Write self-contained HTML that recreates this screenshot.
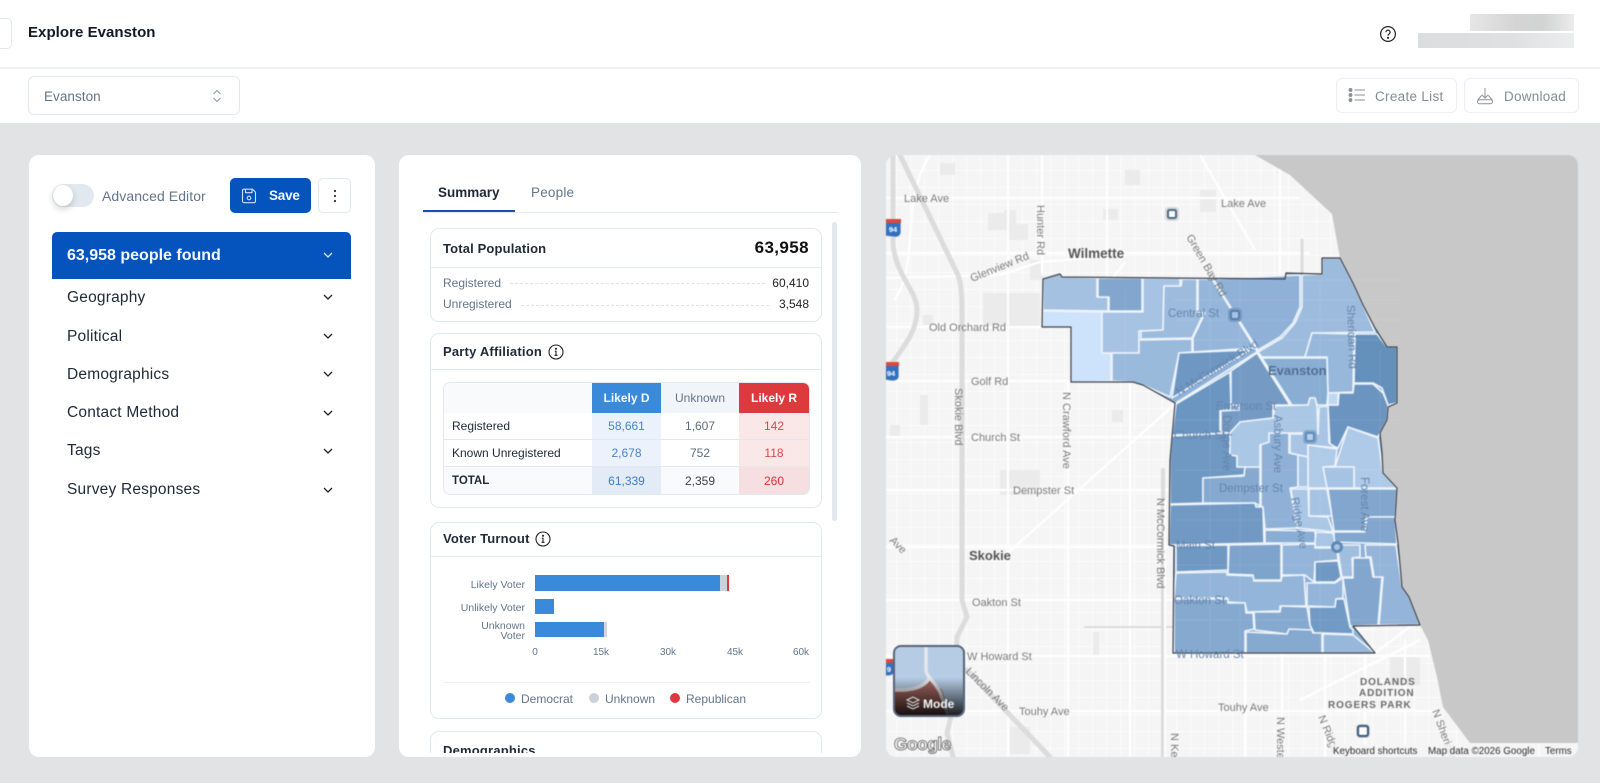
<!DOCTYPE html>
<html lang="en"><head><meta charset="utf-8"><title>Explore Evanston</title>
<style>
*{box-sizing:border-box}
html,body{margin:0;padding:0;width:1600px;height:783px;overflow:hidden;background:#e2e3e5;font-family:"Liberation Sans",sans-serif;color:#111827}
.a{position:absolute}
.t{position:absolute;white-space:nowrap}
.card{position:absolute;background:#fff;border-radius:10px}
.sub{position:absolute;left:430px;width:392px;border:1px solid #e2e8f0;border-radius:9px;background:#fff}
.hr{position:absolute;height:1px;background:#e2e8f0}
.row{position:absolute;left:67px;font-size:15.5px;line-height:20px;color:#1f2937;letter-spacing:.2px;white-space:nowrap}
table{position:absolute;left:443px;top:382px;width:367px;height:113px;border-collapse:separate;border-spacing:0;table-layout:fixed;font-size:12px;border:1px solid #e2e8f0;border-radius:7px;overflow:hidden}
td{padding:0;text-align:center;border-bottom:1px solid #e2e8f0;color:#5f6b7c}
td:first-child{text-align:left;padding-left:8px;color:#1f2937}
tr:last-child td{border-bottom:0}
.d{background:#ebf2fb;color:#4a82cf}.r{background:#fae8e8;color:#d9474b}
.lab{position:absolute;text-align:right;font-size:10.5px;line-height:10px;color:#64748b;right:1075px}
.ax{position:absolute;top:647px;font-size:10px;line-height:11px;color:#64748b;width:30px;text-align:center}
svg text{font-family:"Liberation Sans",sans-serif}
.m{font-size:11px;fill:#7b7b7b}
.o{font-size:11.5px;fill:#6585ab}
</style></head><body>

<div class="a" style="left:0;top:0;width:1600px;height:123px;background:#fff"></div>
<div class="a" style="left:0;top:67px;width:1600px;height:2px;background:#eef0f3"></div>
<div class="a" style="left:-20px;top:18px;width:32px;height:31px;border:1px solid #e2e8f0;border-radius:5px"></div>
<div class="t" style="left:28px;top:23px;font-size:15px;line-height:20px;font-weight:700;color:#111827;letter-spacing:.05px">Explore Evanston</div>

<svg class="a" style="left:1379px;top:25px" width="18" height="18" viewBox="0 0 18 18" fill="none" stroke="#222" stroke-width="1.2"><circle cx="9" cy="9" r="7.4"/><path d="M6.9 7.2a2.1 2.1 0 1 1 3.2 1.8c-.7.4-1.1.8-1.1 1.6"/><circle cx="9" cy="12.8" r=".5" fill="#222"/></svg>
<div class="a" style="left:1470px;top:14px;width:104px;height:17px;background:linear-gradient(90deg,#e6e6e6,#d4d4d4 45%,#d2d3d3 70%,#ececec)"></div>
<div class="a" style="left:1418px;top:33px;width:156px;height:15px;background:linear-gradient(90deg,#dcdddf,#dfe0e2 60%,#eceded)"></div>

<div class="a" style="left:28px;top:76px;width:212px;height:39px;border:1px solid #e2e8f0;border-radius:6px"></div>
<div class="t" style="left:44px;top:87px;font-size:13.5px;line-height:20px;color:#64748b;letter-spacing:.05px">Evanston</div>
<svg class="a" style="left:210px;top:88px" width="14" height="16" viewBox="0 0 14 16" fill="none" stroke="#8b98aa" stroke-width="1"><path d="M3.500 6 7 2.500 10.500 6M3.500 10 7 13.500 10.500 10"/></svg>

<div class="a" style="left:1336px;top:78px;width:121px;height:35px;border:1px solid #eceff3;border-radius:6px"></div>
<svg class="a" style="left:1348px;top:87px" width="18" height="17" viewBox="0 0 18 17" fill="none" stroke="#8b909b" stroke-width="1.1"><circle cx="2.500" cy="3" r="1.400" fill="#8b909b"/><circle cx="2.500" cy="8" r="1.400" fill="#8b909b"/><circle cx="2.500" cy="13" r="1.400" fill="#8b909b"/><path d="M6.500 3H17M6.500 8H17M6.500 13H17"/></svg>
<div class="t" style="left:1375px;top:87px;font-size:13.500px;line-height:20px;color:#868b96;letter-spacing:.3px">Create List</div>
<div class="a" style="left:1464px;top:78px;width:115px;height:35px;border:1px solid #eceff3;border-radius:6px"></div>
<svg class="a" style="left:1476px;top:87px" width="18" height="18" viewBox="0 0 18 18" fill="none" stroke="#8b909b" stroke-width="1"><path d="M9 1v10M5.800 7.800 9 11l3.200-3.200M5.500 8.500 1.800 13M12.500 8.500 16.200 13"/><rect x="1.500" y="12.700" width="15" height="4" rx="2"/></svg>
<div class="t" style="left:1504px;top:87px;font-size:13.500px;line-height:20px;color:#868b96;letter-spacing:.25px">Download</div>

<!-- left card -->
<div class="card" style="left:29px;top:155px;width:346px;height:602px"></div>
<div class="a" style="left:52px;top:184px;width:42px;height:23px;border-radius:12px;background:#e2e8f0"></div>
<div class="a" style="left:53px;top:185px;width:20px;height:21px;border-radius:50%;background:#fff;box-shadow:0 3px 7px rgba(0,0,0,.18)"></div>
<div class="t" style="left:102px;top:186px;font-size:14px;line-height:20px;color:#64748b;letter-spacing:.07px">Advanced Editor</div>
<div class="a" style="left:230px;top:178px;width:81px;height:35px;border-radius:5px;background:#0553bd"></div>
<svg class="a" style="left:241px;top:188px" width="16" height="16" viewBox="0 0 16 16" fill="none" stroke="#cfe0f7" stroke-width="1.100"><path d="M2.500 1.200h9l3 3v9a1.500 1.500 0 0 1-1.500 1.500H3A1.500 1.500 0 0 1 1.500 13V2.200a1 1 0 0 1 1-1zM4.500 1.200v3.500h6.500V1.200"/><circle cx="8" cy="10" r="1.800"/></svg>
<div class="t" style="left:269px;top:186px;font-size:13.500px;line-height:20px;font-weight:700;color:#f3f7fd;letter-spacing:-.2px">Save</div>
<div class="a" style="left:318px;top:178px;width:33px;height:35px;border:1px solid #e2e8f0;border-radius:5px"></div>
<svg class="a" style="left:333px;top:188px" width="4" height="16" viewBox="0 0 4 16" fill="#333"><circle cx="2" cy="3" r="1.100"/><circle cx="2" cy="8" r="1.100"/><circle cx="2" cy="13" r="1.100"/></svg>
<div class="a" style="left:52px;top:232px;width:299px;height:47px;border-radius:5px 5px 0 0;background:#0553bd"></div>
<div class="t" style="left:67px;top:246px;font-size:16px;line-height:20px;font-weight:700;color:#f4f8fe">63,958 people found</div>
<svg class="a" style="left:322px;top:250px" width="12" height="10" viewBox="0 0 12 10" fill="none" stroke="#dbe7f8" stroke-width="1.300"><path d="M2 3l4 4 4-4"/></svg>
<div class="row" style="top:288px">Geography</div>
<div class="row" style="top:327px">Political</div>
<div class="row" style="top:365px">Demographics</div>
<div class="row" style="top:403px">Contact Method</div>
<div class="row" style="top:441px">Tags</div>
<div class="row" style="top:480px">Survey Responses</div>
<svg class="a" style="left:322px;top:291px" width="12" height="210" viewBox="0 0 12 210" fill="none" stroke="#222" stroke-width="1.300"><path d="M2 4l4 4 4-4M2 43l4 4 4-4M2 81l4 4 4-4M2 120l4 4 4-4M2 158l4 4 4-4M2 197l4 4 4-4"/></svg>

<!-- center card -->
<div class="card" style="left:399px;top:155px;width:462px;height:602px"></div>
<div class="t" style="left:438px;top:184px;font-size:13.500px;line-height:18px;font-weight:700;color:#1f2937">Summary</div>
<div class="t" style="left:531px;top:184px;font-size:13.500px;line-height:18px;color:#64748b;letter-spacing:.2px">People</div>
<div class="hr" style="left:423px;top:212px;width:415px"></div>
<div class="a" style="left:423px;top:210px;width:92px;height:2px;background:#1e4fae"></div>
<div class="a" style="left:832px;top:222px;width:5px;height:299px;border-radius:3px;background:#e3e8ef"></div>

<div class="sub" style="top:228px;height:94px"></div>
<div class="hr" style="left:431px;top:267px;width:390px"></div>
<div class="t" style="left:443px;top:240px;font-size:13px;line-height:17px;font-weight:700;color:#1f2937;letter-spacing:.15px">Total Population</div>
<div class="t" style="right:791px;top:238px;font-size:17px;line-height:20px;font-weight:700;color:#111;letter-spacing:.4px">63,958</div>
<div class="t" style="left:443px;top:275px;font-size:12px;line-height:17px;color:#64748b">Registered</div>
<div class="a" style="left:510px;top:283px;width:255px;border-top:1px dashed #dde2e9"></div>
<div class="t" style="right:791px;top:275px;font-size:12px;line-height:17px;color:#222">60,410</div>
<div class="t" style="left:443px;top:296px;font-size:12px;line-height:17px;color:#64748b">Unregistered</div>
<div class="a" style="left:521px;top:305px;width:248px;border-top:1px dashed #dde2e9"></div>
<div class="t" style="right:791px;top:296px;font-size:12px;line-height:17px;color:#222">3,548</div>

<div class="sub" style="top:333px;height:175px"></div>
<div class="hr" style="left:431px;top:369px;width:390px"></div>
<div class="t" style="left:443px;top:343px;font-size:13px;line-height:17px;font-weight:700;color:#1f2937;letter-spacing:.2px">Party Affiliation</div>
<svg class="a" style="left:548px;top:344px" width="16" height="16" viewBox="0 0 16 16" fill="none" stroke="#222" stroke-width="1.100"><circle cx="8" cy="8" r="7"/><path d="M6.800 7.200H8v4M6.500 11.300h3"/><circle cx="8" cy="4.800" r=".5" fill="#222"/></svg>
<table>
<colgroup><col style="width:148px"><col style="width:69px"><col style="width:78px"><col style="width:70px"></colgroup>
<tr style="height:30px"><td style="background:#f8fafc;border:0"></td><td style="background:#3a8ad9;color:#f4f8fe;font-weight:700;border:0">Likely D</td><td style="background:#f1f4f8;color:#64748b;border:0">Unknown</td><td style="background:#dd3a3d;color:#fff;font-weight:700;border:0">Likely R</td></tr>
<tr style="height:27px"><td>Registered</td><td class="d">58,661</td><td>1,607</td><td class="r">142</td></tr>
<tr style="height:27px"><td>Known Unregistered</td><td class="d">2,678</td><td>752</td><td class="r">118</td></tr>
<tr style="height:27px"><td style="background:#f8fafc;font-weight:700;font-size:11.500px">TOTAL</td><td class="d" style="background:#e3ebf6;color:#3f7bc9">61,339</td><td style="background:#f8fafc;color:#374151">2,359</td><td class="r" style="background:#f5dfe0;color:#d73338">260</td></tr>
</table>

<div class="sub" style="top:522px;height:197px"></div>
<div class="hr" style="left:431px;top:556px;width:390px"></div>
<div class="t" style="left:443px;top:530px;font-size:13px;line-height:17px;font-weight:700;color:#1f2937;letter-spacing:.2px">Voter Turnout</div>
<svg class="a" style="left:535px;top:531px" width="16" height="16" viewBox="0 0 16 16" fill="none" stroke="#222" stroke-width="1.100"><circle cx="8" cy="8" r="7"/><path d="M6.800 7.200H8v4M6.500 11.300h3"/><circle cx="8" cy="4.800" r=".5" fill="#222"/></svg>
<div class="lab" style="top:580px">Likely Voter</div>
<div class="lab" style="top:603px">Unlikely Voter</div>
<div class="lab" style="top:621px;width:70px">Unknown<br>Voter</div>
<div class="a" style="left:535px;top:575px;width:185px;height:16px;background:#3a8adb"></div>
<div class="a" style="left:720px;top:575px;width:7px;height:16px;background:#cbd2db"></div>
<div class="a" style="left:727px;top:575px;width:1.500px;height:16px;background:#dd3a3d"></div>
<div class="a" style="left:535px;top:599px;width:19px;height:15px;background:#3a8adb"></div>
<div class="a" style="left:535px;top:622px;width:69px;height:15px;background:#3a8adb"></div>
<div class="a" style="left:604px;top:622px;width:3px;height:15px;background:#d3d6de"></div>
<div class="ax" style="left:520px">0</div><div class="ax" style="left:586px">15k</div><div class="ax" style="left:653px">30k</div><div class="ax" style="left:720px">45k</div><div class="ax" style="left:786px">60k</div>
<div class="hr" style="left:443px;top:682px;width:367px;background:#eceff3"></div>
<div class="a" style="left:505px;top:693px;width:10px;height:10px;border-radius:50%;background:#3a8adb"></div>
<div class="t" style="left:521px;top:691px;font-size:12px;line-height:16px;color:#64748b">Democrat</div>
<div class="a" style="left:589px;top:693px;width:10px;height:10px;border-radius:50%;background:#cbd2db"></div>
<div class="t" style="left:605px;top:691px;font-size:12px;line-height:16px;color:#64748b">Unknown</div>
<div class="a" style="left:670px;top:693px;width:10px;height:10px;border-radius:50%;background:#dd3a3d"></div>
<div class="t" style="left:686px;top:691px;font-size:12px;line-height:16px;color:#64748b">Republican</div>

<div class="a" style="left:430px;top:731px;width:392px;height:22px;overflow:hidden">
<div class="a" style="left:0;top:0;width:392px;height:40px;border:1px solid #e2e8f0;border-radius:9px"></div>
<div class="t" style="left:13px;top:11px;font-size:13px;line-height:17px;font-weight:700;color:#1f2937;letter-spacing:.2px">Demographics</div>
</div>

<!-- map -->
<svg class="a" style="left:0;top:0;filter:blur(.45px)" width="1600" height="783" viewBox="0 0 1600 783">
<defs>
<clipPath id="mc"><rect x="886" y="155" width="692" height="602" rx="10"/></clipPath>
<clipPath id="tc"><rect x="895" y="647" width="68" height="68" rx="6"/></clipPath>
<pattern id="st" width="14" height="17" patternUnits="userSpaceOnUse"><path d="M0 .5H14M.5 0V17" stroke="#fff" stroke-width="1"/></pattern>
<linearGradient id="tg" x1="0" y1="0" x2="0" y2="1"><stop offset=".45" stop-color="#000" stop-opacity="0"/><stop offset="1" stop-color="#000" stop-opacity=".85"/></linearGradient>
</defs>
<g clip-path="url(#mc)">
<rect x="886" y="155" width="692" height="602" fill="#f5f5f5"/>
<rect x="886" y="155" width="692" height="602" fill="url(#st)" opacity=".65"/>
<g fill="#ebebeb">
<path d="M988 213h16v-3h12v14h12v16h-20v-10h-20z"/><rect x="940" y="163" width="15" height="12"/><rect x="1103" y="209" width="15" height="11"/><rect x="1030" y="260" width="13" height="20"/><rect x="983" y="293" width="57" height="34"/><rect x="923" y="315" width="10" height="10"/><rect x="1112" y="410" width="11" height="12"/><rect x="1010" y="727" width="20" height="27"/><rect x="1093" y="632" width="6" height="23"/><rect x="920" y="395" width="8" height="30"/><rect x="890" y="425" width="10" height="12"/><rect x="1000" y="470" width="40" height="25"/><rect x="1390" y="655" width="30" height="30"/><rect x="1125" y="170" width="15" height="15"/><rect x="1200" y="190" width="16" height="22"/>
</g>
<g fill="none" stroke="#fff" stroke-width="2.200">
<path d="M886 198H1300M886 253H1310M886 278L1000 275 1040 262 1090 258M886 327H1071M886 381H1071M886 437H1170M886 490H1170M886 547H1170M886 600H1175M886 656H1430M886 711H1440M1174 600H1000"/>
<path d="M1042 155V275M1107 155V380M1068 380V757M1008 155V757M1130 382V757M1245 653V757M1282 653V757M1325 653V757M1365 653V757M1405 640V757M1280 155V275M1340 155V255"/>
<path d="M1200 155L1255 250M1176 403L1000 560M1125 262L1075 327M1375 653L1430 612M1300 700L1420 640M895 300C920 260 900 200 930 155"/>
</g>
<g fill="none" stroke="#dcdcdc" stroke-linecap="round">
<path d="M893 155V243C895 275 917 290 917 310 917 335 900 350 886 372" stroke-width="5"/>
<path d="M900 155L958 275C962 285 962 300 962 320V600L967 617 957 637 955 700 947 733 953 757" stroke-width="5"/>
<path d="M967 670L1050 757" stroke-width="5"/>
<path d="M1163 470V757" stroke-width="4"/>
<path d="M1302 240V275" stroke-width="3"/>
<path d="M1085 627H1250" stroke-width="2"/>
</g>
<path d="M1165 500V757" stroke="#fff" stroke-width="2"/>
<path d="M1255 155L1290 175 1332 214 1340 258 1353 283 1363 305 1375 328 1387 347 1397 347 1397 403 1388 407 1387 420 1380 433 1382 453 1383 473 1397 488 1395 520 1398 543 1402 587 1409 597 1420 625 1428 640 1437 677 1443 707 1470 743H1578V155Z" fill="#c8c8c8"/>

<!-- tracts -->
<path d="M1043 279L1060 274 1062 277 1285 279 1286 273 1322 274 1322 258 1340 258 1353 283 1363 305 1375 328 1387 347 1397 347 1397 403 1388 407 1387 420 1380 433 1382 453 1383 473 1397 488 1395 520 1398 543 1402 587 1409 597 1420 625 1353 626 1375 653 1173 653 1174 546 1169 545 1170 460 1175 403 1143 385 1133 382 1071 382 1071 327 1042 327Z" fill="#8fb1d7"/>
<g stroke="#eef4fb" stroke-width="1.600" stroke-linejoin="round">
<path fill="#a4c1e2" d="M1043 279L1060 274 1062 277 1097 278 1097 297 1108 297 1108 311 1043 310Z"/>
<path fill="#82a6cd" d="M1098 278H1142V311H1109V297H1098Z"/>
<path fill="#cde2fb" d="M1043 311L1102 312 1102 353 1111 353 1111 381 1071 382 1071 327 1042 327Z"/>
<path fill="#a6c3e3" d="M1102 312H1143V278H1180V286H1164L1163 330 1139 331V353H1102Z"/>
<path fill="#9dbcdd" d="M1182 279H1197V312L1204 313 1192 338 1141 339V331L1163 330 1164 286H1181Z"/>
<path fill="#9abadc" d="M1112 353H1139V340L1192 339V352L1179 353 1170 397 1143 385 1133 382 1112 381Z"/>
<path fill="#95b6da" d="M1198 279H1212L1255 348 1193 352V338L1205 313 1198 312Z"/>
<path fill="#8fb1d7" d="M1213 279L1300 275V307L1293 323 1280 337 1258 350Z"/>
<path fill="#9dbcdd" d="M1302 275L1322 274 1322 258 1340 258 1353 283 1375 332 1312 333 1305 357 1262 357 1258 352 1282 338 1295 323 1302 307Z"/>
<path fill="#97b8db" d="M1312 333L1354 334 1353 392 1328 393 1327 357 1305 357Z"/>
<path fill="#6490bc" d="M1355 334H1377L1387 347H1397V403L1388 405 1382 388 1373 383H1354Z"/>
<path fill="#6b95c0" d="M1354 384H1373L1383 393 1388 405 1387 420 1380 433 1378 437 1348 427 1338 448 1330 445 1328 405H1338L1339 393 1353 393Z"/>
<path fill="#8aaed3" d="M1262 358H1327L1328 393 1327 405H1317L1315 398H1310L1308 405H1292Z"/>
<path fill="#6f97c3" d="M1179 353L1250 350 1172 398Z"/>
<path fill="#6c96c2" d="M1176 404L1230 372 1231 405V410H1220V432L1230 433 1172 435Z"/>
<path fill="#759bc5" d="M1231 371L1257 353 1290 405H1273V418L1240 422 1230 433 1221 432V411L1239 410V405H1231Z"/>
<path fill="#6f98c3" d="M1172 436L1230 433V455L1237 456V467H1245L1244 475 1203 478V503L1170 504 1170 460Z"/>
<path fill="#86a9d0" d="M1203 478L1244 476 1245 467H1260V506L1255 503H1203Z"/>
<path fill="#7199c4" d="M1170 505L1255 503 1256 507H1263L1264 543 1169 545Z"/>
<path fill="#8fb1d7" d="M1261 444L1269 442V433H1289V453L1298 455V487L1290 488 1297 528 1265 529 1263 507 1261 506Z"/>
<path fill="#aac7e6" d="M1240 422L1273 418 1275 406 1308 405 1310 398H1315L1317 406 1318 433H1269V442L1260 445V467H1237V456L1230 455V433Z"/>
<path fill="#c0d8f2" d="M1328 393H1338V405H1328Z"/>
<path fill="#a8c5e5" d="M1290 434H1318L1319 407 1328 406 1329 443 1337 448 1308 445V457L1290 453Z"/>
<path fill="#aecae8" d="M1348 427L1378 438 1383 473 1397 488H1354V467H1335Z"/>
<path fill="#a6c3e3" d="M1323 467H1354V488H1327Z"/>
<path fill="#b0cbe8" d="M1308 445L1337 449 1335 466 1323 467 1327 488H1308Z"/>
<path fill="#a8c5e5" d="M1298 455L1308 457V487H1298Z"/>
<path fill="#aac7e6" d="M1291 489H1308L1309 516 1328 517 1333 532 1317 530 1297 528Z"/>
<path fill="#a6c3e3" d="M1309 489H1327L1332 516H1309Z"/>
<path fill="#82a6cd" d="M1328 489H1397L1395 517H1366L1365 531H1334Z"/>
<path fill="#82a6cd" d="M1367 517H1395L1397 544 1334 542V532H1365Z"/>
<path fill="#8aaed3" d="M1265 530L1315 531 1316 543H1265Z"/>
<path fill="#a8c5e5" d="M1316 532L1333 533 1336 547H1315V543Z"/>
<path fill="#6f98c3" d="M1176 546L1228 545V570L1176 572Z"/>
<path fill="#7ea3cc" d="M1229 545L1281 544V580H1254L1253 575 1228 574Z"/>
<path fill="#93b5d9" d="M1282 545L1315 544V548H1337L1338 560 1315 562 1314 582 1305 575H1282Z"/>
<path fill="#6f98c3" d="M1315 562L1338 561 1341 577 1335 582H1315Z"/>
<path fill="#a0bfdf" d="M1337 545H1360V557L1352 558 1353 577H1342Z"/>
<path fill="#82a6cd" d="M1353 558H1370L1373 577H1382L1378 625 1350 626 1343 578H1353Z"/>
<path fill="#94b5d9" d="M1365 545H1396L1402 587 1409 597 1420 625H1379L1383 577H1374L1371 557H1366Z"/>
<path fill="#93b5d9" d="M1176 573L1227 572V575L1253 576 1254 581H1281L1282 576 1304 575 1306 606H1280V611L1247 612 1245 603 1228 602 1227 598H1174Z"/>
<path fill="#93b5d9" d="M1307 583H1335L1343 578V598L1336 599 1335 607 1307 606Z"/>
<path fill="#86a9d0" d="M1254 612H1280L1281 606 1307 607 1310 625 1313 633H1290L1287 634 1255 630Z"/>
<path fill="#719ac4" d="M1309 607H1335L1336 599H1344L1350 627 1353 630V634L1323 633 1314 633 1310 625Z"/>
<path fill="#86a9d0" d="M1174 599H1228V603L1245 603 1246 613H1253L1254 629 1245 631V653H1174Z"/>
<path fill="#86a9d0" d="M1246 632L1287 634 1289 629 1312 630 1313 633H1322V653H1246Z"/>
<path fill="#97b8db" d="M1323 634L1353 635 1375 653H1323Z"/>
</g>
<path d="M1176 403L1257 352M1213 279L1290 405" stroke="#eef4fb" stroke-width="1.800" fill="none"/>
<path d="M1174 280H1400M1174 300H1400M1174 320H1400M1174 340H1400M1174 420H1400M1174 470H1400M1174 520H1400M1174 565H1400M1174 620H1400M1125 290V380M1210 280V650M1240 280V650M1320 280V650M1380 350V600" stroke="#fff" stroke-opacity=".08" stroke-width="1" fill="none"/>
<path d="M1043 279L1060 274 1062 277 1285 279 1286 273 1322 274 1322 258 1340 258 1353 283 1363 305 1375 328 1387 347 1397 347 1397 403 1388 407 1387 420 1380 433 1382 453 1383 473 1397 488 1395 520 1398 543 1402 587 1409 597 1420 625 1353 626 1375 653 1173 653 1174 546 1169 545 1170 460 1175 403 1143 385 1133 382 1071 382 1071 327 1042 327Z" fill="none" stroke="#3a3f47" stroke-width="1.200" stroke-linejoin="round"/>

<!-- labels -->
<g class="m">
<text class="m" x="904" y="202">Lake Ave</text>
<text class="m" x="1221" y="207">Lake Ave</text>
<text class="m" transform="translate(1037,205) rotate(90)">Hunter Rd</text>
<text class="m" transform="translate(972,282) rotate(-22)">Glenview Rd</text>
<text class="m" x="929" y="331">Old Orchard Rd</text>
<text class="m" x="971" y="385">Golf Rd</text>
<text class="m" x="971" y="441">Church St</text>
<text class="m" x="1013" y="494">Dempster St</text>
<text class="m" x="972" y="606">Oakton St</text>
<text class="m" x="967" y="660">W Howard St</text>
<text class="m" x="1019" y="715">Touhy Ave</text>
<text class="m" x="1218" y="711">Touhy Ave</text>
<text class="m" transform="translate(1063,392) rotate(90)">N Crawford Ave</text>
<text class="m" transform="translate(955,388) rotate(90)">Skokie Blvd</text>
<text class="m" transform="translate(1157,498) rotate(90)">N McCormick Blvd</text>
<text class="m" transform="translate(1186,237) rotate(60)">Green Bay Rd</text>
<text class="m" transform="translate(965,672) rotate(45)">Lincoln Ave</text>
<text class="m" transform="translate(889,541) rotate(45)">Ave</text>
<text class="m" transform="translate(1171,733) rotate(90)">N Kedzie</text>
<text class="m" transform="translate(1277,717) rotate(90)">N Western</text>
<text class="m" transform="translate(1318,717) rotate(68)">N Ridge</text>
<text class="m" transform="translate(1432,711) rotate(70)">N Sheridan</text>
</g>
<text x="1068" y="258" font-size="13.500" font-weight="700" fill="#555">Wilmette</text>
<text x="969" y="560" font-size="13" font-weight="700" fill="#555">Skokie</text>
<g font-size="10" font-weight="700" fill="#6b6b6b" letter-spacing=".9">
<text x="1360" y="685">DOLANDS</text><text x="1359" y="696">ADDITION</text><text x="1328" y="708">ROGERS PARK</text>
</g>
<text class="o" x="1168" y="317">Central St</text>
<text x="1268" y="375" font-size="13" font-weight="700" fill="#4f7095">Evanston</text>
<text class="o" transform="translate(1179,396) rotate(-32)">N McCormick Blvd</text>
<text class="o" x="1216" y="410">Emerson St</text>
<text class="o" x="1174" y="439">Church St</text>
<text class="o" x="1219" y="492">Dempster St</text>
<text class="o" x="1176" y="549">Main St</text>
<text class="o" x="1174" y="604">Oakton St</text>
<text class="o" x="1176" y="658" fill="#6e7f93">W Howard St</text>
<text class="o" transform="translate(1223,415) rotate(90)">Dodge Ave</text>
<text class="o" transform="translate(1274,415) rotate(90)">Asbury Ave</text>
<text class="o" transform="translate(1291,498) rotate(80)">Ridge Ave</text>
<text class="o" transform="translate(1361,477) rotate(90)">Forest Ave</text>
<text class="o" transform="translate(1347,305) rotate(88)">Sheridan Rd</text>

<!-- transit -->
<g><rect x="1165" y="207" width="14" height="14" rx="4" fill="#d8d8d8"/><rect x="1168" y="210" width="8" height="8" rx="1.500" fill="#fff" stroke="#4a6a88" stroke-width="2"/></g>
<g><rect x="1228" y="308" width="14" height="14" rx="4" fill="#7a9cc2"/><rect x="1231" y="311" width="8" height="8" rx="1.500" fill="#a8c4e2" stroke="#4f7fb0" stroke-width="2"/></g>
<g><rect x="1303" y="430" width="14" height="14" rx="4" fill="#86a9ce"/><rect x="1306" y="433" width="8" height="8" rx="1.500" fill="#b8d0ea" stroke="#5f8ab6" stroke-width="2"/></g>
<circle cx="1337" cy="547" r="6" fill="#5e87b3"/><circle cx="1337" cy="547" r="3" fill="#a8c4e2"/>
<g><rect x="1356" y="724" width="14" height="14" rx="4" fill="#dcdcdc"/><rect x="1358" y="726" width="10" height="10" rx="2" fill="#fff" stroke="#3f5f7d" stroke-width="2.200"/></g>

<!-- I-94 shields -->
<g font-size="7.500" font-weight="700" fill="#fff" text-anchor="middle">
<path d="M885 220H901V232C901 236 897 238 893 237L885 236Z" fill="#3270c0" stroke="#e6e6e6"/><path d="M885 219H901V223H885Z" fill="#d94a3c"/><text x="893" y="232">94</text>
<path d="M885 364H899V376C899 380 895 381 892 381L885 380Z" fill="#3270c0" stroke="#e6e6e6"/><path d="M885 362H899V366H885Z" fill="#d94a3c"/><text x="891" y="376">94</text>
<path d="M885 660H894V672C894 675 890 676 886 676H885Z" fill="#3270c0" stroke="#e6e6e6"/><path d="M885 659H894V663H885Z" fill="#d94a3c"/><text x="889" y="672">9</text>
</g>

<!-- bottom attribution -->
<rect x="1330" y="744" width="248" height="13" fill="#f5f5f5" fill-opacity=".85"/>
<g font-size="9.800" fill="#2b2b2b"><text x="1333" y="754">Keyboard shortcuts</text><text x="1428" y="754">Map data ©2026 Google</text><text x="1545" y="754">Terms</text></g>
<path d="M1539 744V757" stroke="#fff"/>

<!-- google -->
<text x="894" y="750" font-size="17.500" font-weight="700" fill="#fff" stroke="#565656" stroke-width=".8" letter-spacing="-.6">Google</text>
</g>

<!-- mode -->
<rect x="894" y="646" width="70" height="70" rx="7" fill="#b6cce4" stroke="#566279" stroke-width="2"/>
<g clip-path="url(#tc)">
<rect x="895" y="647" width="68" height="68" fill="#b6cce4"/>
<path d="M895 690C915 690 925 686 929 678L942 690 950 715H895Z" fill="#a2665f"/>
<path d="M926 647V670C926 676 935 682 940 692L948 715M895 690C915 691 924 686 929 679" fill="none" stroke="#e4e6ea" stroke-width="3.500"/>
<rect x="895" y="647" width="68" height="68" fill="url(#tg)"/>
</g>
<g fill="none" stroke="#dfe4ea" stroke-width="1"><path d="M907 700l6-3 6 3-6 3zM907 703l6 3 6-3M907 706l6 3 6-3"/></g>
<text x="923" y="708" font-size="12" font-weight="700" fill="#f6f8fb">Mode</text>
</svg>

</body></html>
